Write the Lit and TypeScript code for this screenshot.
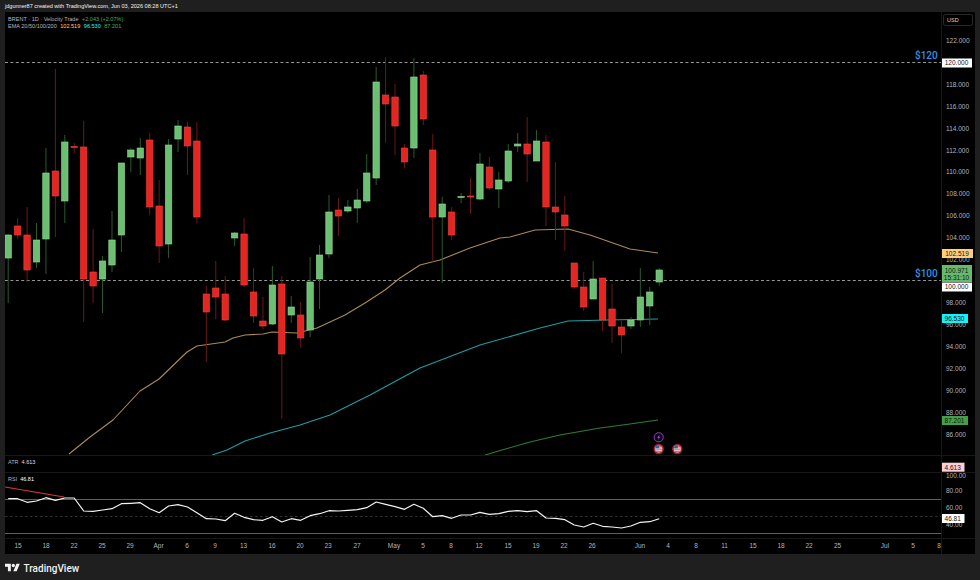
import { LitElement, html, svg, css } from 'lit';
import { customElement } from 'lit/decorators.js';

// candle data is in page pixels: [wick top, body top, body bottom, wick bottom, up]
const CANDLES: number[][] = [
    [234, 235, 258, 303, 1], [218, 226, 235, 239, 0], [207, 235, 270, 282, 0], [223, 240, 262, 268, 1],
    [148, 173, 239, 274, 1], [69, 171, 196, 237, 0], [135, 142, 201, 223, 1], [143, 146.5, 147.5, 153, 0],
    [121, 147, 279, 322, 0], [229, 272, 286, 303, 0], [256, 261, 279, 313, 1], [211, 240, 265, 272, 1],
    [163, 163, 235, 252, 1], [148, 150, 157, 172, 1], [138, 148, 158, 175, 1], [133, 140, 207, 215, 0],
    [180, 206, 246, 263, 0], [139, 145, 244, 258, 1], [120, 126, 139, 152, 1], [122, 127, 146, 175, 0],
    [122, 141, 217, 223, 0], [286, 294, 312, 362, 0], [261, 288, 297, 319, 0], [276, 294, 320, 321, 0],
    [232, 233, 238, 246, 1], [218, 234, 285, 287, 0], [268, 292, 316, 323, 0], [297, 321, 326, 329, 0],
    [266, 285, 324, 325, 1], [276, 284, 354, 419, 0], [296, 307, 315, 323, 1], [302, 315, 338, 348, 0],
    [257, 282, 330, 337, 1], [245, 255, 279, 309, 1], [195, 212, 254, 258, 1], [198, 210, 216, 236, 0],
    [200, 207, 211, 213, 1], [189, 200, 208, 223, 1], [154, 173, 201, 203, 1], [67, 82, 178, 185, 1],
    [57, 95, 104, 143, 0], [84, 97, 126, 155, 0], [144, 148, 162, 168, 0], [58, 77, 148, 158, 1],
    [71, 75, 119, 125, 0], [134, 150, 217, 262, 0], [197, 204, 217, 283, 1], [207, 212, 235, 240, 0],
    [193, 196.5, 197.5, 203, 1], [178, 196, 197, 214, 0], [153, 164, 199, 200, 1], [157, 167, 188, 190, 0],
    [172, 180, 189, 208, 1], [144, 151, 181, 183, 1], [133, 144, 146, 152, 1], [117, 144, 154, 182, 0],
    [130, 141, 161, 161, 1], [135, 142, 207, 226, 0], [162, 207, 212, 240, 0], [196, 215, 226, 251, 0],
    [263, 263, 287, 289, 0], [272, 287, 307, 311, 0], [261, 279, 299, 299, 1], [278, 278, 320, 331, 0],
    [284, 309, 326, 343, 0], [321, 327, 335, 353, 0], [317, 320, 326, 329, 1], [268, 297, 320, 327, 1],
    [287, 292, 306, 325, 1], [268, 270, 282, 286, 1],
];

const RSI = [
    143, 143, 154, 150, 140, 148, 141, 141, 180, 181, 177, 173, 158, 157, 155, 173, 185, 165, 161, 168,
    185, 203, 204, 209, 187, 199, 206, 208, 197, 213, 203, 208, 194, 188, 179, 180, 178, 176, 170, 153,
    160, 167, 175, 160, 172, 197, 194, 202, 192, 192, 184, 190, 188, 181, 179, 182, 179, 201, 202, 206,
    222, 228, 217, 226, 228, 231, 225, 214, 212, 203,
];

const EMA_ORANGE = '69,454 90,437 113,420 140,391 159,379 187,352 197,346 225,342 233,338 245,335 263,334 272,332 297,333 317,328 330,322 345,315 365,303 385,290 400,278 420,265 440,260 470,248 500,238 510,237 535,230 568,229 590,235 613,243 630,249 658,253';
const EMA_TEAL = '212,455 227,450 245,441 270,433 300,425 330,415 370,395 420,368 480,345 540,328 568,321 607,320 658,319';
const EMA_GREEN = '485,455 502,450 530,442 560,435 600,428 630,424 658,420';

const PRICE_TICKS: [string, number][] = [
    ['122.000', 40], ['118.000', 84], ['116.000', 106], ['114.000', 128], ['112.000', 150], ['110.000', 171],
    ['108.000', 193], ['106.000', 215], ['104.000', 237], ['102.000', 259], ['98.000', 302], ['96.000', 324],
    ['94.000', 346], ['92.000', 368], ['90.000', 390], ['88.000', 412], ['86.000', 434],
];

// x, y, width, height, class, text
const PRICE_BADGES: [number, number, number, number, string, string][] = [
    [941, 58.5, 31, 9, 'b-white', '120.000'],
    [941, 249, 32, 9, 'b-orange', '102.519'],
    [941, 282.5, 31, 9, 'b-white', '100.000'],
    [941, 314, 27, 9, 'b-cyan', '96.530'],
    [941, 416, 27, 9, 'b-green', '87.201'],
];

const TIME_TICKS: [string, number][] = [
    ['15', 18], ['18', 46], ['22', 74], ['25', 102], ['29', 130], ['Apr', 158.5], ['6', 187], ['9', 215],
    ['13', 243.5], ['16', 272], ['20', 300], ['23', 328], ['27', 357], ['May', 394], ['5', 423], ['8', 451],
    ['12', 479], ['15', 508], ['19', 536], ['22', 564], ['26', 592], ['Jun', 640], ['4', 668], ['8', 696],
    ['11', 724.5], ['15', 753], ['18', 781], ['22', 809], ['25', 837.5], ['Jul', 885], ['5', 913], ['8', 939],
];

const candleX = (i: number) => 8.2 + 9.435 * i;

@customElement('app-root')
export class AppRoot extends LitElement {
    static styles = css`
        :host {
            display: block;
            width: 980px;
            height: 580px;
            background: #1f1f1f;
            font-family: 'Liberation Sans', Arial, sans-serif;
            overflow: hidden;
        }
        .title {
            height: 12px;
            padding-left: 5px;
            font-size: 5.55px;
            line-height: 12px;
            color: #f4f4f4;
            white-space: nowrap;
        }
        .chart {
            display: grid;
            grid-template-columns: 937px 33px;
            grid-template-rows: 443px 16px 65px 15px;
            row-gap: 1px;
            column-gap: 0;
            width: 970px;
            margin-left: 5px;
            background: #17171a;
        }
        .cell {
            position: relative;
            background: #000;
        }
        .cell svg {
            display: block;
        }
        .axis {
            border-left: 1px solid #17171a;
            margin-left: -1px;
        }
        .legend {
            position: absolute;
            left: 3px;
            top: 3.5px;
            font-size: 5.55px;
            line-height: 7.5px;
            color: #b2b5be;
            white-space: nowrap;
        }
        .legend span {
            margin-left: 3.5px;
        }
        .pane-label {
            position: absolute;
            left: 3px;
            font-size: 5.5px;
            line-height: 7px;
            color: #b2b5be;
            white-space: nowrap;
        }
        .pane-label span {
            margin-left: 3px;
        }
        .pane-atr { top: 2.5px; }
        .pane-rsi { top: 3px; }
        .c-up { color: #4caf50; }
        .c-orange { color: #ffcc80; }
        .c-cyan { color: #18ffff; }
        .c-pink { color: #ffcdd2; }
        .c-white { color: #fff; }
        .footer {
            display: flex;
            align-items: center;
            gap: 3.5px;
            height: 28px;
            padding-left: 5px;
        }
        .footer svg {
            display: block;
        }
        .brand {
            font-family: Roboto, 'Liberation Sans', sans-serif;
            font-size: 10px;
            font-weight: 500;
            color: #f2f2f2;
        }

        .wick-up { stroke: #2a5a2e; stroke-width: 1; }
        .wick-down { stroke: #6b1818; stroke-width: 1; }
        .body-up { fill: #6cbf72; stroke: #8fd994; stroke-width: 0.6; }
        .body-down { fill: #e42622; stroke: #f4403c; stroke-width: 0.6; }
        .line { fill: none; stroke-linejoin: round; }
        .ema-o { stroke: #a98a5a; stroke-width: 1.1; }
        .ema-t { stroke: #1c9ea3; stroke-width: 1.1; }
        .ema-g { stroke: #2f7d34; stroke-width: 1.1; }
        .level { stroke: #bdbdbd; stroke-width: 0.8; stroke-dasharray: 3 2.4; }
        .level-tag { fill: #2f93ea; font-family: Roboto, sans-serif; font-size: 10px; font-weight: 500; }
        .tick { fill: #b2b5be; font-size: 6.5px; }
        .usd { fill: none; stroke: #2a2a2c; }
        .usd-text { fill: #d1d4dc; font-size: 5.5px; }
        .badge-text { fill: #131313; font-size: 6.5px; text-anchor: middle; }
        .b-white { fill: #fff; }
        .b-orange { fill: #ffcc80; }
        .b-cyan { fill: #18f0f8; }
        .b-green { fill: #43a047; }
        .b-live { fill: #66bb6a; }
        .b-pink { fill: #ffcdd2; }
        .rsi-band { stroke: #5d5e66; stroke-width: 1; }
        .rsi-mid { stroke: #47484e; stroke-width: 0.7; stroke-dasharray: 2.5 2.5; }
        .rsi-line { stroke: #f4f4f4; stroke-width: 1.2; }
        .rsi-trend { stroke: #d93a3a; stroke-width: 1.1; }
        .time { fill: #b2b5be; font-size: 6.5px; text-anchor: middle; }
    `;

    // main pane: candles, emas, levels, event markers
    private mainPane() {
        return html`
            <svg width="937" height="443" viewBox="5 12 937 443">
                <line class="level" x1="5" y1="62.5" x2="942" y2="62.5"></line>
                <line class="level" x1="5" y1="280.5" x2="942" y2="280.5"></line>
                <polyline class="line ema-o" points=${EMA_ORANGE}></polyline>
                <polyline class="line ema-t" points=${EMA_TEAL}></polyline>
                <polyline class="line ema-g" points=${EMA_GREEN}></polyline>
                ${CANDLES.map((c, i) => {
                    const x = candleX(i);
                    const up = c[4] === 1;
                    return svg`
                        <line class=${up ? 'wick-up' : 'wick-down'} x1=${x} x2=${x} y1=${c[0]} y2=${c[3]}></line>
                        <rect class=${up ? 'body-up' : 'body-down'} x=${x - 3.2} y=${c[1]} width="6.4" height=${c[2] - c[1]}></rect>
                    `;
                })}
                <text class="level-tag" x="915" y="59">$120</text>
                <text class="level-tag" x="915" y="277">$100</text>
                <circle cx="658.7" cy="437.3" r="4.6" fill="#10061a" stroke="#8e3fb5" stroke-width="1"></circle>
                <path d="M659.6 434.6 L657.2 437.8 L658.6 437.8 L657.9 440 L660.3 436.8 L658.9 436.8 Z" fill="#a654cf"></path>
                ${[658.7, 677.3].map((x) => this.flag(x, 449))}
            </svg>
            <div class="legend">
                <div>BRENT · 1D · Velocity Trade<span class="c-up">+2.043 (+2.07%)</span></div>
                <div>EMA 20/50/100/200<span class="c-orange">102.519</span><span class="c-cyan">96.530</span><span class="c-up">87.201</span></div>
            </div>
        `;
    }

    private flag(x: number, y: number) {
        return svg`
            <g transform="translate(${x} ${y})">
                <circle r="5.2" fill="#a8232a"></circle>
                <circle r="3.6" fill="#f4f4f4"></circle>
                <path d="M-3.4 -1.2 A3.6 3.6 0 0 1 0.6 -3.55 L0.6 -0.4 L-3.4 -0.4 Z" fill="#2a5fb0"></path>
                <path d="M0.6 -2.6 H3 M0.6 -1 H3.5 M-3.5 0.8 H3.5 M-3 2.4 H3" stroke="#d8343a" stroke-width="0.8" fill="none"></path>
            </g>
        `;
    }

    private priceAxis() {
        return svg`
            <svg width="33" height="443" viewBox="942 12 33 443">
                <rect class="usd" x="943.5" y="14.5" width="29" height="11" rx="2"></rect>
                <text class="usd-text" x="947" y="22">USD</text>
                ${PRICE_TICKS.map(([t, y]) => svg`<text class="tick" x="946" y=${y + 2.5}>${t}</text>`)}
                ${PRICE_BADGES.map(([x, y, w, h, cls, t]) => svg`
                    <rect class=${cls} x=${x} y=${y} width=${w} height=${h}></rect>
                    <text class="badge-text" x=${x + w / 2} y=${y + h / 2 + 2.4}>${t}</text>
                `)}
                <rect class="b-live" x="941" y="265" width="31" height="17"></rect>
                <text class="badge-text" x="956.5" y="272.5">100.971</text>
                <text class="badge-text" x="956.5" y="280">15:31:10</text>
            </svg>
        `;
    }

    private rsiPane() {
        const points = RSI.map((v, i) => `${candleX(i).toFixed(1)},${(450 + v / 3).toFixed(1)}`).join(' ');
        return html`
            <svg width="937" height="65" viewBox="5 472 937 65">
                <line class="rsi-band" x1="5" y1="498.5" x2="942" y2="498.5"></line>
                <line class="rsi-mid" x1="5" y1="515.5" x2="942" y2="515.5"></line>
                <line class="rsi-band" x1="5" y1="532.5" x2="942" y2="532.5"></line>
                <line class="rsi-trend" x1="5" y1="486" x2="64" y2="496"></line>
                <polyline class="line rsi-line" points=${points}></polyline>
            </svg>
            <div class="pane-label pane-rsi">RSI<span class="c-white">46.81</span></div>
        `;
    }

    render() {
        return html`
            <div class="title">jdgunner87 created with TradingView.com, Jun 03, 2026 08:28 UTC+1</div>
            <div class="chart">
                <div class="cell">${this.mainPane()}</div>
                <div class="cell axis">${this.priceAxis()}</div>
                <div class="cell"><div class="pane-label pane-atr">ATR<span class="c-pink">4.613</span></div></div>
                <div class="cell axis">
                    <svg width="33" height="16" viewBox="942 456 33 16">
                        <rect class="b-pink" x="941" y="462.7" width="23.5" height="9"></rect>
                        <text class="badge-text" x="952.7" y="469.6">4.613</text>
                    </svg>
                </div>
                <div class="cell">${this.rsiPane()}</div>
                <div class="cell axis">
                    <svg width="33" height="65" viewBox="942 472 33 65">
                        ${[['100.00', 474.5], ['80.00', 489.5], ['60.00', 506], ['40.00', 523]].map(([t, y]) => svg`<text class="tick" x="946" y=${(y as number) + 2.5}>${t}</text>`)}
                        <rect class="b-white" x="941" y="513" width="23.5" height="9"></rect>
                        <text class="badge-text" x="952.7" y="519.9">46.81</text>
                    </svg>
                </div>
                <div class="cell">
                    <svg width="937" height="15" viewBox="5 538 937 15">
                        ${TIME_TICKS.map(([t, x]) => svg`<text class="time" x=${x} y="547.4">${t}</text>`)}
                    </svg>
                </div>
                <div class="cell axis"></div>
            </div>
            <div class="footer">
                <svg width="15" height="12" viewBox="0 0 36 28" fill="#f2f2f2">
                    <path d="M14 22H7V11H0V4h14v18zM28 22h-8l7.5-18h8L28 22z"></path>
                    <circle cx="20" cy="8" r="4"></circle>
                </svg>
                <span class="brand">TradingView</span>
            </div>
        `;
    }
}
